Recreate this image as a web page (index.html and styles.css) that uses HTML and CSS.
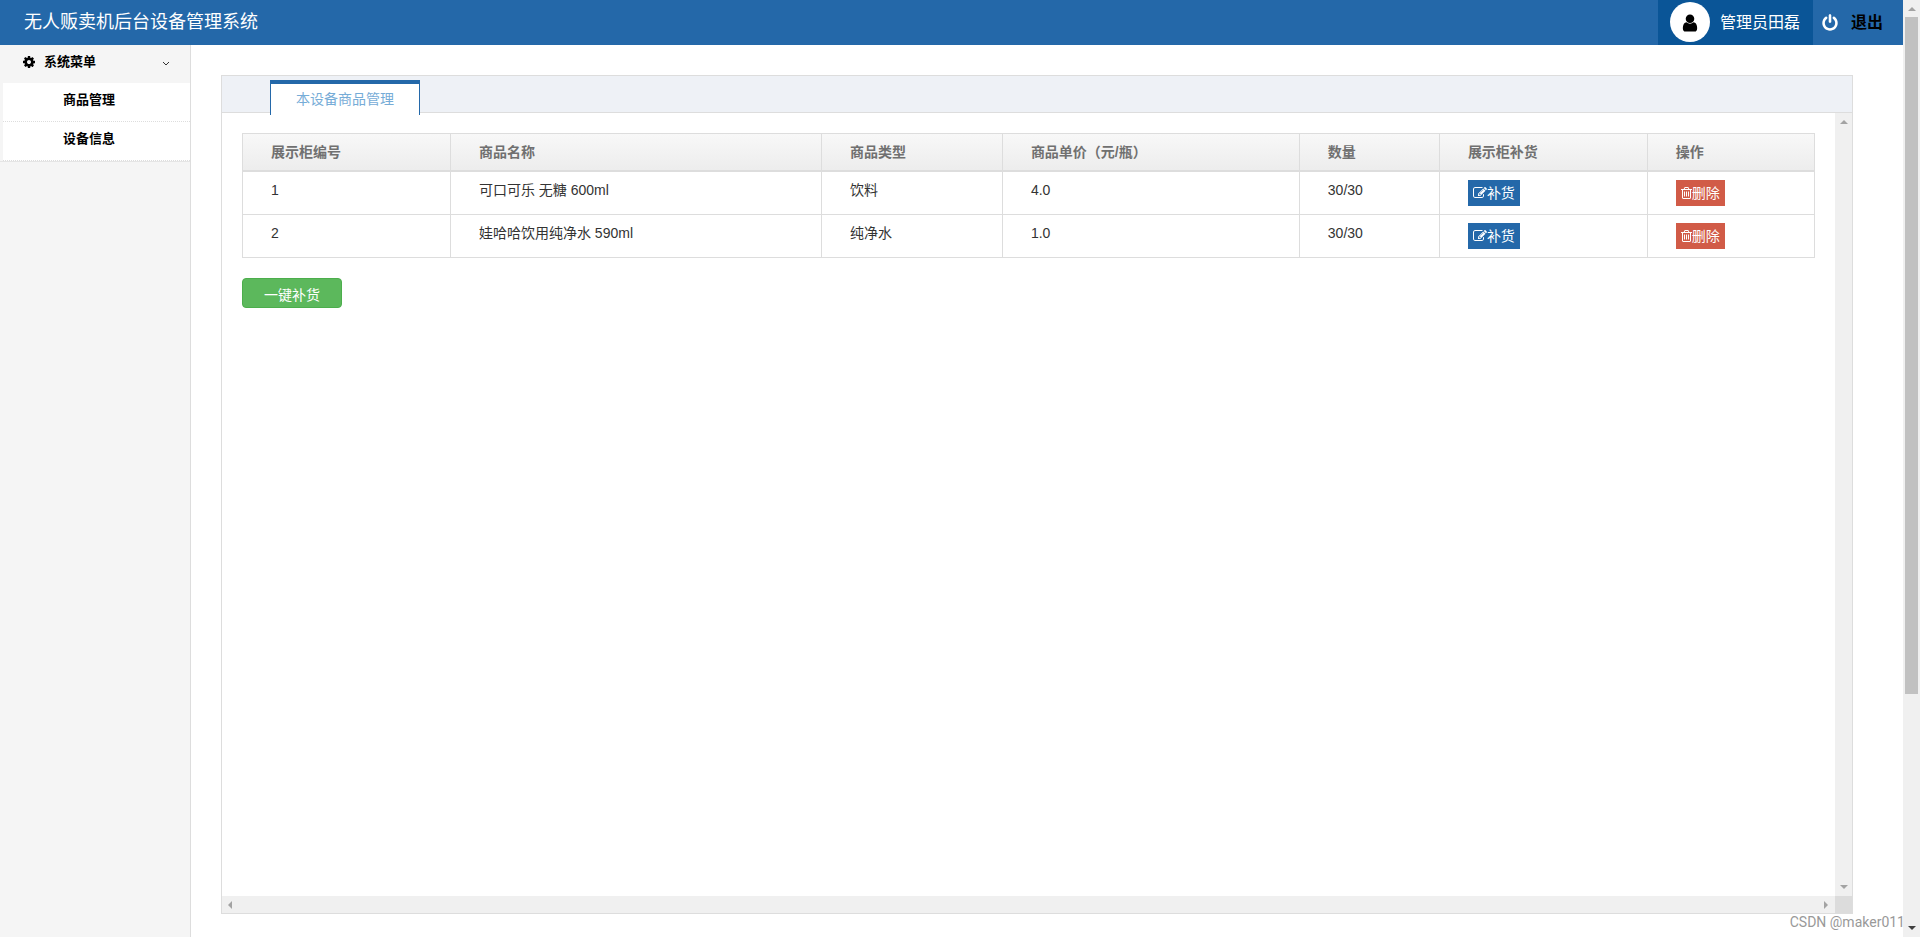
FILE: index.html
```html
<!DOCTYPE html>
<html lang="zh-CN">
<head>
<meta charset="utf-8">
<title>无人贩卖机后台设备管理系统</title>
<link rel="stylesheet" href="styles.css">
</head>
<body>
<svg class="defs" aria-hidden="true">
  <symbol id="i-cog" viewBox="0 0 1792 1792"><path d="M1152 896q0-106-75-181t-181-75-181 75-75 181 75 181 181 75 181-75 75-181zm512-109v222q0 12-8 23t-20 13l-185 28q-19 54-39 91 35 50 107 138 10 12 10 25t-9 23q-27 37-99 108t-94 71q-12 0-26-9l-138-108q-44 23-91 38-16 136-29 186-7 28-36 28h-222q-14 0-24.500-8.500t-11.500-21.500l-28-184q-49-16-90-37l-141 107q-10 9-25 9-14 0-25-11-126-114-165-168-7-10-7-23 0-12 8-23 15-21 51-66.500t54-70.500q-27-50-41-99l-183-27q-13-2-21-12.500t-8-23.500v-222q0-12 8-23t19-13l186-28q14-46 39-92-40-57-107-138-10-12-10-24 0-10 9-23 26-36 98.500-107.500t94.500-71.500q13 0 26 10l138 107q44-23 91-38 16-136 29-186 7-28 36-28h222q14 0 24.500 8.500t11.500 21.500l28 184q49 16 90 37l142-107q9-9 24-9 13 0 25 10 129 119 165 170 7 8 7 22 0 12-8 23-15 21-51 66.500t-54 70.500q26 50 41 98l183 28q13 2 21 12.500t8 23.500z"/></symbol>
  <symbol id="i-power" viewBox="0 0 1792 1792"><path d="M1664 896q0 156-61 298t-164 245-245 164-298 61-298-61-245-164-164-245-61-298q0-182 80.500-343t226.500-270q43-32 95.500-25t83.500 50q32 42 24.500 94.500t-49.500 84.500q-98 74-151.500 181t-53.500 228q0 104 40.500 198.500t109.500 163.500 163.500 109.500 198.500 40.500 198.500-40.500 163.500-109.500 109.500-163.500 40.500-198.500q0-121-53.500-228t-151.500-181q-42-32-49.500-84.500t24.500-94.500q31-43 84-50t95 25q146 109 226.500 270t80.500 343zm-640-768v640q0 52-38 90t-90 38-90-38-38-90v-640q0-52 38-90t90-38 90 38 38 90z"/></symbol>
  <symbol id="i-user" viewBox="0 0 1792 1792"><path d="M1536 1399q0 109-62.500 187t-150.500 78h-854q-88 0-150.500-78t-62.500-187q0-85 8.500-160.500t31.500-152 58.500-131 94-89 134.500-34.500q131 128 313 128t313-128q76 0 134.500 34.500t94 89 58.500 131 31.500 152 8.500 160.500zm-256-887q0 159-112.500 271.500t-271.500 112.500-271.500-112.500-112.500-271.500 112.500-271.500 271.500-112.500 271.500 112.500 112.500 271.500z"/></symbol>
  <symbol id="i-edit" viewBox="0 0 1792 1792"><path d="M888 1184l116-116-152-152-116 116v56h96v96h56zm440-720q-16-16-33 1l-350 350q-17 17-1 33t33-1l350-350q17-17 1-33zm80 594v190q0 119-84.500 203.500t-203.500 84.500h-832q-119 0-203.500-84.500t-84.500-203.500v-832q0-119 84.500-203.500t203.500-84.500h832q63 0 117 25 15 7 18 23 3 17-9 29l-49 49q-14 14-32 8-23-6-45-6h-832q-66 0-113 47t-47 113v832q0 66 47 113t113 47h832q66 0 113-47t47-113v-126q0-13 9-22l64-64q15-15 35-7t20 29zm-96-738l288 288-672 672h-288v-288zm444 132l-92 92-288-288 92-92q28-28 68-28t68 28l152 152q28 28 28 68t-28 68z"/></symbol>
  <symbol id="i-trash" viewBox="192 0 1408 1792"><path d="M576 704h128v640h-128zM832 704h128v640h-128zM1088 704h128v640h-128zM1344 1460v-948h-896v948q0 22 7 40.500t14.500 27 10.500 8.500h832q3 0 10.500-8.500t14.500-27 7-40.500zm-672-1076h448l-48-117q-7-9-17-11h-317q-10 2-17 11zm928 32v64q0 14-9 23t-23 9h-96v948q0 83-47 143.500t-113 60.500h-832q-66 0-113-58.500t-47-141.500v-952h-96q-14 0-23-9t-9-23v-64q0-14 9-23t23-9h309l70-167q15-37 54-63t79-26h320q40 0 79 26t54 63l70 167h309q14 0 23 9t9 23z"/></symbol>
</svg>
<div class="shell">
  <div class="app">
    <header class="topbar">
      <h1 class="brand">无人贩卖机后台设备管理系统</h1>
      <a class="account" href="#"><span class="avatar"><svg class="icon-20"><use href="#i-user"/></svg></span>管理员田磊</a>
      <a class="logout" href="#"><svg class="icon-18"><use href="#i-power"/></svg>退出</a>
    </header>
    <div class="body">
      <nav class="sidebar">
        <button class="menu-head" type="button"><svg class="icon-14"><use href="#i-cog"/></svg><span class="menu-title">系统菜单</span><svg class="chevron" viewBox="0 0 8 5"><path d="M1 1l3 3 3-3"/></svg></button>
        <ul class="submenu">
          <li><a href="#">商品管理</a></li>
          <li><a href="#">设备信息</a></li>
        </ul>
      </nav>
      <main class="main">
        <section class="panel">
          <div class="tabs"><a class="tab" href="#">本设备商品管理</a></div>
          <div class="viewport">
            <div class="content">
              <table class="goods">
                <colgroup><col class="c-no"><col class="c-name"><col class="c-type"><col class="c-price"><col class="c-count"><col class="c-fill"><col class="c-op"></colgroup>
                <thead>
                  <tr><th>展示柜编号</th><th>商品名称</th><th>商品类型</th><th>商品单价（元/瓶）</th><th>数量</th><th>展示柜补货</th><th>操作</th></tr>
                </thead>
                <tbody>
                  <tr><td>1</td><td>可口可乐 无糖 600ml</td><td>饮料</td><td>4.0</td><td>30/30</td><td><button class="btn fill" type="button"><svg class="icon-14"><use href="#i-edit"/></svg>补货</button></td><td><button class="btn del" type="button"><svg class="icon-trash"><use href="#i-trash"/></svg>删除</button></td></tr>
                  <tr><td>2</td><td>娃哈哈饮用纯净水 590ml</td><td>纯净水</td><td>1.0</td><td>30/30</td><td><button class="btn fill" type="button"><svg class="icon-14"><use href="#i-edit"/></svg>补货</button></td><td><button class="btn del" type="button"><svg class="icon-trash"><use href="#i-trash"/></svg>删除</button></td></tr>
                </tbody>
              </table>
              <button class="fill-all" type="button">一键补货</button>
            </div>
            <div class="vbar"><i class="arrow up"></i><i class="arrow down"></i></div>
            <div class="hbar"><i class="arrow left"></i><i class="arrow right"></i></div>
            <div class="corner"></div>
          </div>
        </section>
      </main>
    </div>
  </div>
  <div class="vbar page-bar"><i class="arrow up"></i><div class="track"><div class="thumb"></div></div><i class="arrow down dark"></i></div>
  <span class="watermark">CSDN @maker011</span>
</div>
</body>
</html>
```
FILE: styles.css
```css
* { box-sizing: border-box; }
body {
  margin: 0;
  background: #fff;
  color: #333;
  font: 14px/20px "Liberation Sans", "Noto Sans CJK SC", sans-serif;
}
a { color: inherit; text-decoration: none; }
button { font: inherit; border: 0; cursor: pointer; }
svg { fill: currentColor; flex: none; }
.defs { display: none; }
.icon-14 { width: 14px; height: 14px; }
.icon-18 { width: 18px; height: 18px; }
.icon-20 { width: 20px; height: 20px; }
.icon-trash { width: 11px; height: 14px; }

.shell { position: relative; display: flex; height: 100vh; overflow: hidden; }
.app { flex: 1; min-width: 0; display: flex; flex-direction: column; }

.topbar { display: flex; height: 45px; background: #2468a9; color: #fff; }
.brand { flex: 1; margin: 0; padding-left: 24px; font-size: 18px; font-weight: 400; line-height: 44px; }
.account { display: flex; align-items: center; gap: 10px; padding: 0 13px 0 12px; background: #0a5597; font-size: 16px; }
.avatar { display: flex; align-items: center; justify-content: center; width: 40px; height: 40px; margin-bottom: 1px; padding-top: 2px; border-radius: 50%; background: #fff; color: #000; }
.logout { display: flex; align-items: center; gap: 12px; width: 90px; padding-left: 8px; color: #000; font-size: 16px; font-weight: 700; }
.logout svg { color: #fff; }

.body { flex: 1; min-height: 0; display: flex; }
.sidebar { width: 191px; background: #f5f5f5; border-right: 1px solid #ddd; color: #000; font-size: 13px; font-weight: 700; }
.menu-head { display: flex; align-items: center; width: 100%; height: 38px; padding: 0 20px 4px 22px; background: none; color: #000; text-align: left; }
.menu-title { flex: 1; padding-left: 8px; }
.chevron { width: 8px; height: 5px; margin-top: 2px; fill: none; stroke: #333; }
.submenu { margin: 0; padding: 0; list-style: none; border-bottom: 1px solid #e5e5e5; }
.submenu li { margin-left: 3px; background: #fff; border-bottom: 1px dotted #ddd; }
.submenu a { display: block; height: 38px; padding-left: 60px; line-height: 34px; }

.main { flex: 1; min-width: 0; display: flex; padding: 30px 50px 23px 30px; }
.panel { flex: 1; min-width: 0; display: flex; flex-direction: column; border: 1px solid #ddd; }
.tabs { display: flex; height: 37px; padding: 4px 48px 0; background: #eef1f6; border-bottom: 1px solid #ddd; }
.tab { height: 35px; padding: 5px 25px; border: 1px solid #2468a9; border-top-width: 4px; border-bottom: 0; background: #fff; color: #76acd7; }

.viewport { flex: 1; min-height: 0; display: grid; grid-template: minmax(0, 1fr) 17px / minmax(0, 1fr) 17px; }
.content { padding: 20px; }
.goods { width: 100%; table-layout: fixed; border-collapse: collapse; }
.goods th, .goods td { padding: 8px 28px; border: 1px solid #ddd; text-align: left; vertical-align: top; }
.goods th { border-bottom-width: 2px; color: #707070; }
.goods thead tr { background: linear-gradient(#f8f8f8, #ececec); }
.c-no, .c-fill { width: 13.23%; }
.c-name { width: 23.6%; }
.c-type { width: 11.51%; }
.c-price { width: 18.89%; }
.c-count { width: 8.91%; }
.btn { display: flex; align-items: center; height: 26px; padding: 0 5px; color: #fff; white-space: nowrap; }
.fill { background: #2468a9; }
.del { background: #d15b47; }
.fill-all { display: block; width: 100px; height: 30px; margin-top: 20px; padding: 4px 0 0; border: 1px solid #4cae4c; border-radius: 4px; background: #5cb85c; color: #fff; }

.vbar, .hbar { display: flex; align-items: center; justify-content: space-between; background: #f0f0f0; }
.vbar { flex-direction: column; padding: 7px 0; }
.hbar { padding: 0 7px 0 6px; }
.corner { background: #dcdcdc; }
.arrow { border: 4px solid transparent; }
.up { border-top: 0; border-bottom-color: #a3a3a3; }
.down { border-bottom: 0; border-top-color: #a3a3a3; }
.left { border-left: 0; border-right-color: #a3a3a3; }
.right { border-right: 0; border-left-color: #a3a3a3; }
.dark { border-top-color: #404040; }
.page-bar { width: 17px; }
.track { flex: 1; width: 13px; padding: 6px 0; }
.thumb { height: 75%; background: #c1c1c1; }
.watermark { position: absolute; right: 15px; bottom: 5px; color: #999; font-family: Roboto, sans-serif; }
```
